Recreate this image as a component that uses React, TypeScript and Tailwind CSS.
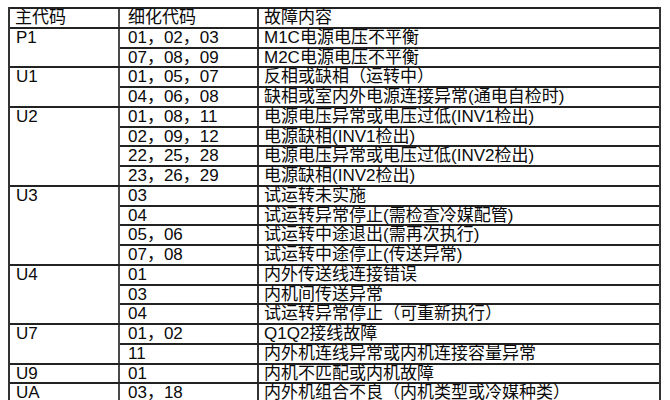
const rows: { code: string; items: [string, string][] }[] = [
  {
    code: 'P1',
    items: [
      ['01，02，03', 'M1C电源电压不平衡'],
      ['07，08，09', 'M2C电源电压不平衡'],
    ],
  },
  {
    code: 'U1',
    items: [
      ['01，05，07', '反相或缺相（运转中）'],
      ['04，06，08', '缺相或室内外电源连接异常(通电自检时)'],
    ],
  },
  {
    code: 'U2',
    items: [
      ['01，08，11', '电源电压异常或电压过低(INV1检出)'],
      ['02，09，12', '电源缺相(INV1检出)'],
      ['22，25，28', '电源电压异常或电压过低(INV2检出)'],
      ['23，26，29', '电源缺相(INV2检出)'],
    ],
  },
  {
    code: 'U3',
    items: [
      ['03', '试运转未实施'],
      ['04', '试运转异常停止(需检查冷媒配管)'],
      ['05，06', '试运转中途退出(需再次执行)'],
      ['07，08', '试运转中途停止(传送异常)'],
    ],
  },
  {
    code: 'U4',
    items: [
      ['01', '内外传送线连接错误'],
      ['03', '内机间传送异常'],
      ['04', '试运转异常停止（可重新执行）'],
    ],
  },
  {
    code: 'U7',
    items: [
      ['01，02', 'Q1Q2接线故障'],
      ['11', '内外机连线异常或内机连接容量异常'],
    ],
  },
  {
    code: 'U9',
    items: [['01', '内机不匹配或内机故障']],
  },
  {
    code: 'UA',
    items: [
      ['03，18', '内外机组合不良（内机类型或冷媒种类）'],
      ['', ''],
    ],
  },
]

export default function App() {
  return (
    <div className="min-h-screen bg-white pt-[7px] pl-[8px] font-['Liberation_Sans_Narrow','Liberation_Sans','Noto_Sans_CJK_SC',sans-serif] text-[17px] leading-[17.76px] text-[#0a0a0a]">
      <div className="w-[653px] border-x-2 border-x-[#333]">
        {/* Header */}
        <div className="flex border-t-2 border-[#222]">
          <div className="w-[110px] h-[17.76px] shrink-0 border-r-2 border-r-[#4a4a4a] pl-[5px]">主代码</div>
          <div className="w-[139px] h-[17.76px] shrink-0 border-r-2 border-r-[#333] pl-[8px]">细化代码</div>
          <div className="flex-1 h-[17.76px] pl-[5px]">故障内容</div>
        </div>

        {rows.map(({ code, items }) => (
          <div key={code} className="flex border-t-2 border-[#222]">
            <div className="w-[110px] shrink-0 border-r-2 border-r-[#4a4a4a] pl-[6px]">{code}</div>
            <div className="flex-1">
              {items.map(([sub, text], i) => (
                <div key={i} className={`flex ${i > 0 ? 'border-t-2 border-[#222]' : ''}`}>
                  <div className="w-[139px] h-[17.76px] shrink-0 border-r-2 border-r-[#333] pl-[8px] whitespace-nowrap">{sub}</div>
                  <div className="flex-1 h-[17.76px] pl-[5px] whitespace-nowrap">{text}</div>
                </div>
              ))}
            </div>
          </div>
        ))}
      </div>
    </div>
  )
}
